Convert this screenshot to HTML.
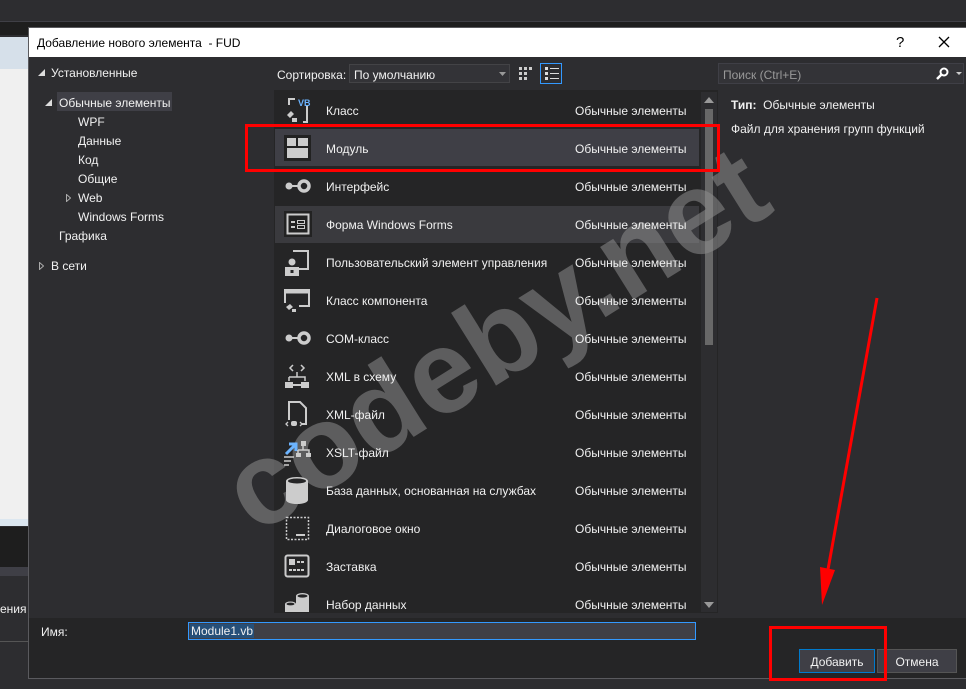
<!DOCTYPE html>
<html><head><meta charset="utf-8">
<style>
*{margin:0;padding:0;box-sizing:border-box}
body{width:966px;height:689px;overflow:hidden;background:#2d2d30;font-family:"Segoe UI","Liberation Sans","DejaVu Sans",sans-serif;font-size:12px;color:#f1f1f1;position:relative}
.a{position:absolute;white-space:nowrap}
.t{margin-top:2px}
.row{position:absolute;left:275px;width:424px;height:38px}
.row .n{position:absolute;left:51px;top:13px}
.row .c{position:absolute;left:300px;top:13px}
.row svg{position:absolute;left:8px;top:5px}
</style></head><body>
<div class="a" style="left:0;top:0;width:966px;height:21px;background:#2d2d30"></div>
<div class="a" style="left:0;top:21px;width:966px;height:14px;background:#1e1e1e;border-top:1px solid #3f3f46"></div>
<div class="a" style="left:0;top:37px;width:28px;height:483px;background:#f0f0f0"></div>
<div class="a" style="left:0;top:37px;width:28px;height:32px;background:#d6e0ea"></div>
<div class="a" style="left:0;top:519px;width:28px;height:7px;background:#dce7f0"></div>
<div class="a" style="left:0;top:527px;width:28px;height:40px;background:#1e1e1e"></div>
<div class="a" style="left:0;top:567px;width:28px;height:9px;background:#3f3f46"></div>
<div class="a t" style="left:0;top:600px;color:#f1f1f1">ения</div>
<div class="a" style="left:0;top:641px;width:28px;height:1px;background:#555"></div>

<div class="a" style="left:28px;top:27px;width:940px;height:652px;background:#2d2d30;border:1px solid #5a5a5e"></div>
<div class="a" style="left:29px;top:28px;width:937px;height:29px;background:#fff"></div>
<div class="a t" style="left:37px;top:34px;color:#000;font-size:12px">Добавление нового элемента&nbsp; - FUD</div>
<div class="a t" style="left:896px;top:32px;color:#000;font-size:15px">?</div>
<svg class="a" style="left:938px;top:36px" width="12" height="12"><path d="M1 1L11 11M11 1L1 11" stroke="#000" stroke-width="1.3"/></svg>

<svg class="a" style="left:38px;top:69px" width="7" height="7"><path d="M7 0V7H0Z" fill="#ddd"/></svg>
<div class="a t" style="left:51px;top:64px">Установленные</div>
<div class="a" style="left:57px;top:92px;width:115px;height:19px;background:#3f3f46"></div>
<svg class="a" style="left:45px;top:99px" width="7" height="7"><path d="M7 0V7H0Z" fill="#ddd"/></svg>
<div class="a t" style="left:59px;top:94px">Обычные элементы</div>
<div class="a t" style="left:78px;top:113px">WPF</div>
<div class="a t" style="left:78px;top:132px">Данные</div>
<div class="a t" style="left:78px;top:151px">Код</div>
<div class="a t" style="left:78px;top:170px">Общие</div>
<svg class="a" style="left:66px;top:194px" width="5" height="8"><path d="M0.5 0.5L4.5 4L0.5 7.5Z" fill="none" stroke="#aaa"/></svg>
<div class="a t" style="left:78px;top:189px">Web</div>
<div class="a t" style="left:78px;top:208px">Windows Forms</div>
<div class="a t" style="left:59px;top:227px">Графика</div>
<svg class="a" style="left:39px;top:262px" width="5" height="8"><path d="M0.5 0.5L4.5 4L0.5 7.5Z" fill="none" stroke="#aaa"/></svg>
<div class="a t" style="left:51px;top:257px">В сети</div>

<div class="a t" style="left:277px;top:66px">Сортировка:</div>
<div class="a" style="left:349px;top:64px;width:161px;height:19px;background:#333337;border:1px solid #434346"></div>
<div class="a t" style="left:354px;top:66px">По умолчанию</div>
<svg class="a" style="left:499px;top:72px" width="7" height="4"><path d="M0 0H7L3.5 4Z" fill="#999"/></svg>
<svg class="a" style="left:519px;top:66px" width="16" height="16" fill="#ccc"><rect x="0" y="1" width="3" height="3"/><rect x="5" y="1" width="3" height="3"/><rect x="10" y="1" width="3" height="3"/><rect x="0" y="6" width="3" height="3"/><rect x="5" y="6" width="3" height="3"/><rect x="0" y="11" width="3" height="3"/><rect x="5" y="11" width="3" height="3"/></svg>
<div class="a" style="left:540px;top:63px;width:22px;height:21px;border:1px solid #3399ff"></div>
<svg class="a" style="left:545px;top:67px" width="14" height="14" fill="#ddd"><rect x="0" y="0" width="3" height="3"/><rect x="5" y="1" width="9" height="1"/><rect x="0" y="5" width="3" height="3"/><rect x="5" y="6" width="9" height="1"/><rect x="0" y="10" width="3" height="3"/><rect x="5" y="11" width="9" height="1"/></svg>

<div class="a" style="left:718px;top:63px;width:246px;height:21px;background:#333337;border:1px solid #3f3f46"></div>
<div class="a t" style="left:723px;top:66px;color:#999">Поиск (Ctrl+E)</div>
<svg class="a" style="left:936px;top:67px" width="26" height="14"><circle cx="8" cy="5" r="3.5" fill="none" stroke="#fff" stroke-width="2"/><path d="M5.5 7.5L1 12" stroke="#fff" stroke-width="2.5"/><path d="M20 5H26L23 8Z" fill="#ccc"/></svg>

<div class="a t" style="left:731px;top:96px"><b>Тип:</b>&nbsp; Обычные элементы</div>
<div class="a t" style="left:731px;top:120px">Файл для хранения групп функций</div>

<div class="a" style="left:274px;top:90px;width:444px;height:523px;background:#252526"></div>
<div class="a" style="left:275px;top:129px;width:424px;height:37px;background:#3f3f46"></div>
<div class="a" style="left:275px;top:206px;width:424px;height:37px;background:#3a3a3e"></div>
<div class="a" style="left:701px;top:92px;width:16px;height:520px;background:#2d2d30"></div>
<svg class="a" style="left:704px;top:97px" width="10" height="6"><path d="M0 6H10L5 0Z" fill="#999"/></svg>
<div class="a" style="left:705px;top:109px;width:8px;height:236px;background:#686868"></div>
<svg class="a" style="left:704px;top:602px" width="10" height="6"><path d="M0 0H10L5 6Z" fill="#999"/></svg>

<!-- watermark -->
<div class="a" style="left:185px;top:280px;font-family:'Liberation Sans',sans-serif;font-weight:bold;font-size:118px;color:rgba(140,140,140,0.55);transform:rotate(-32deg);transform-origin:50% 50%;line-height:118px;width:620px;text-align:center">codeby.net</div>

<div class="row" style="top:91px"><svg width="30" height="30"><path d="M6 9V3H12M20 26H24V9" fill="none" stroke="#ccc" stroke-width="2"/><text x="15" y="10" font-size="9" font-weight="bold" fill="#6cb4ff" font-family="Liberation Sans">VB</text><path d="M4 19L8 15L11 18L7 22ZM9 22H14V26H9Z" fill="#ccc"/></svg><span class="n">Класс</span><span class="c">Обычные элементы</span></div>
<div class="row" style="top:129px"><svg width="30" height="30"><rect x="1" y="1" width="27" height="26" fill="#222"/><rect x="4" y="4" width="9" height="8" fill="#ccc"/><rect x="15" y="4" width="10" height="8" fill="#ccc"/><rect x="4" y="14" width="21" height="10" fill="#ccc"/></svg><span class="n">Модуль</span><span class="c">Обычные элементы</span></div>
<div class="row" style="top:167px"><svg width="30" height="30"><circle cx="6" cy="14" r="3.5" fill="#ccc"/><path d="M9 14H16" stroke="#ccc" stroke-width="2"/><circle cx="21" cy="14" r="5" fill="none" stroke="#ccc" stroke-width="3.5"/></svg><span class="n">Интерфейс</span><span class="c">Обычные элементы</span></div>
<div class="row" style="top:205px"><svg width="30" height="30"><rect x="1" y="1" width="28" height="26" fill="#222"/><rect x="4.5" y="4.5" width="21" height="19" fill="none" stroke="#ccc" stroke-width="2"/><path d="M8 12H12M8 17H12" stroke="#ccc" stroke-width="2"/><rect x="14.5" y="10.5" width="7" height="3" fill="none" stroke="#ccc"/><rect x="14.5" y="15.5" width="7" height="3" fill="none" stroke="#ccc"/></svg><span class="n">Форма Windows Forms</span><span class="c">Обычные элементы</span></div>
<div class="row" style="top:243px"><svg width="30" height="30"><path d="M10 3H25V21H16" fill="none" stroke="#ccc" stroke-width="2"/><circle cx="9" cy="14" r="3.5" fill="#ccc"/><path d="M2 19H16V28H2Z" fill="#ccc"/><rect x="7.5" y="22" width="3" height="3" fill="#252526"/></svg><span class="n">Пользовательский элемент управления</span><span class="c">Обычные элементы</span></div>
<div class="row" style="top:281px"><svg width="30" height="30"><path d="M2 17V4H26V20H16" fill="none" stroke="#ccc" stroke-width="2"/><path d="M1 6H27" stroke="#ccc" stroke-width="3"/><path d="M3 21L7 18L10 21L6 24ZM9 23H13V26H9Z" fill="#ccc"/></svg><span class="n">Класс компонента</span><span class="c">Обычные элементы</span></div>
<div class="row" style="top:319px"><svg width="30" height="30"><circle cx="6" cy="14" r="3.5" fill="#ccc"/><path d="M9 14H16" stroke="#ccc" stroke-width="2"/><circle cx="21" cy="14" r="5" fill="none" stroke="#ccc" stroke-width="3.5"/></svg><span class="n">COM-класс</span><span class="c">Обычные элементы</span></div>
<div class="row" style="top:357px"><svg width="30" height="30"><path d="M10 3L7 6L10 9M18 3L21 6L18 9M14 10V15M6 15H22V19M6 15V19" fill="none" stroke="#ccc" stroke-width="1.5"/><rect x="2" y="20" width="8" height="6" fill="#ccc"/><rect x="18" y="20" width="8" height="6" fill="#ccc"/><rect x="10" y="22" width="8" height="2" fill="#ccc"/></svg><span class="n">XML в схему</span><span class="c">Обычные элементы</span></div>
<div class="row" style="top:395px"><svg width="30" height="30"><path d="M6 20V2H17L23 8V24H18" fill="none" stroke="#ccc" stroke-width="2"/><path d="M5 22L3 24L5 26M17 22L19 24L17 26" fill="none" stroke="#ccc" stroke-width="1.3"/><rect x="8" y="21" width="6" height="5" rx="2" fill="#ccc"/></svg><span class="n">XML-файл</span><span class="c">Обычные элементы</span></div>
<div class="row" style="top:433px"><svg width="30" height="30"><path d="M3 16L12 7M6 6H13V13" fill="none" stroke="#6cb4ff" stroke-width="3"/><rect x="18" y="3" width="5" height="5" fill="#ccc"/><path d="M20 8V12M15 12H26V15M15 12V15" fill="none" stroke="#ccc" stroke-width="1.5"/><rect x="13" y="15" width="5" height="4" fill="#ccc"/><rect x="23" y="15" width="5" height="4" fill="#ccc"/><path d="M1 19H11M1 23H8M1 27H6" stroke="#ccc" stroke-width="1.5"/></svg><span class="n">XSLT-файл</span><span class="c">Обычные элементы</span></div>
<div class="row" style="top:471px"><svg width="30" height="30"><path d="M3 5V24A11 4 0 0 0 25 24V5Z" fill="#ccc"/><ellipse cx="14" cy="5" rx="11" ry="4" fill="#ccc"/><ellipse cx="14" cy="5" rx="9" ry="2.5" fill="#252526"/></svg><span class="n">База данных, основанная на службах</span><span class="c">Обычные элементы</span></div>
<div class="row" style="top:509px"><svg width="30" height="30"><rect x="3.5" y="3.5" width="22" height="22" fill="none" stroke="#ccc" stroke-width="1.5" stroke-dasharray="2 1.5"/><path d="M13 21H22" stroke="#ccc" stroke-width="2"/></svg><span class="n">Диалоговое окно</span><span class="c">Обычные элементы</span></div>
<div class="row" style="top:547px"><svg width="30" height="30"><rect x="2.5" y="3.5" width="23" height="21" rx="2" fill="none" stroke="#ccc" stroke-width="2"/><rect x="6" y="7" width="6" height="6" fill="#ccc"/><path d="M14 10H22M6 18H22" stroke="#ccc" stroke-width="2" stroke-dasharray="3 1"/></svg><span class="n">Заставка</span><span class="c">Обычные элементы</span></div>
<div class="row" style="top:585px;height:27px;overflow:hidden"><svg width="30" height="30"><path d="M13 6V24H26V6Z" fill="#ccc"/><ellipse cx="19.5" cy="6" rx="6.5" ry="3" fill="#ccc"/><ellipse cx="19.5" cy="6" rx="5" ry="1.6" fill="#252526"/><path d="M2 14V28H13V14Z" fill="#ccc"/><ellipse cx="7.5" cy="14" rx="5.5" ry="2.5" fill="#ccc"/><ellipse cx="7.5" cy="14" rx="4" ry="1.4" fill="#252526"/></svg><span class="n">Набор данных</span><span class="c">Обычные элементы</span></div>

<div class="a" style="left:29px;top:618px;width:937px;height:60px;background:#252526"></div>
<div class="a t" style="left:41px;top:623px">Имя:</div>
<div class="a" style="left:188px;top:622px;width:508px;height:18px;background:#3f3f46;border:1px solid #3399ff"></div>
<div class="a t" style="left:190px;top:622px;background:#264f78;padding:0 1px">Module1.vb</div>
<div class="a" style="left:799px;top:649px;width:76px;height:24px;background:#3f3f46;border:1px solid #007acc;text-align:center;line-height:24px">Добавить</div>
<div class="a" style="left:877px;top:649px;width:80px;height:24px;background:#3f3f46;border:1px solid #555;text-align:center;line-height:24px">Отмена</div>

<div class="a" style="left:245px;top:124px;width:475px;height:48px;border:3px solid #f00"></div>
<div class="a" style="left:769px;top:626px;width:118px;height:55px;border:3px solid #f00"></div>
<svg class="a" style="left:810px;top:295px" width="75" height="315"><path d="M67 3L17 280" stroke="#f00" stroke-width="3"/><path d="M10 272L12 310L25 275Z" fill="#f00"/></svg>
</body></html>
